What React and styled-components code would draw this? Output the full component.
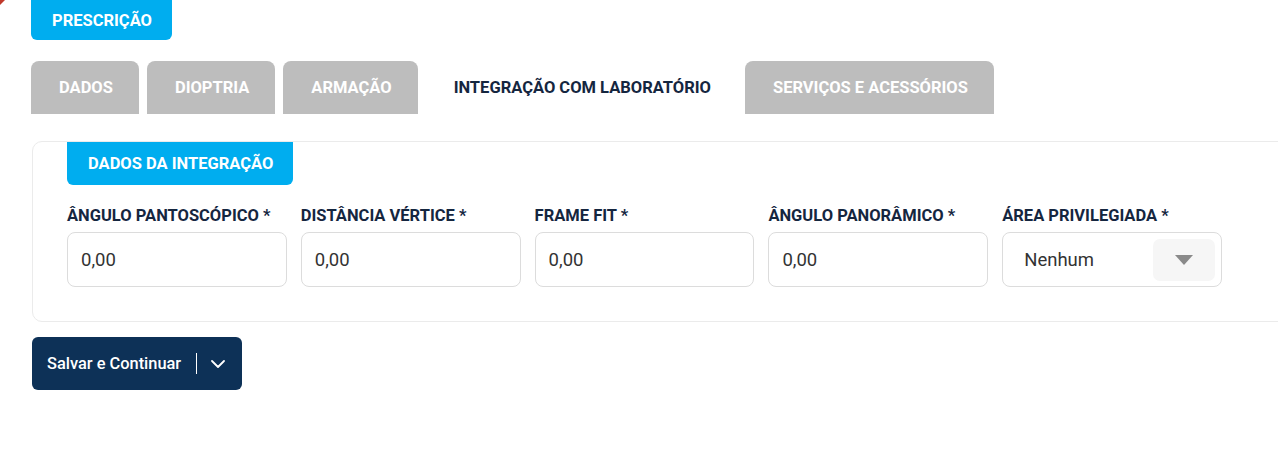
import React from "react";
import styled, { createGlobalStyle } from "styled-components";

const Global = createGlobalStyle`
  html, body { margin: 0; padding: 0; background: #fff; overflow: hidden; }
  body { font-family: Roboto, "Noto Sans", Arial, sans-serif; }
  * { box-sizing: border-box; }
`;

const Page = styled.div`
  position: relative;
  width: 1278px;
  height: 459px;
  padding-left: 31px;
  display: flex;
  flex-direction: column;
  align-items: flex-start;
`;

const Corner = styled.div`
  position: absolute;
  left: 0;
  top: 0;
  width: 0;
  height: 0;
  border-top: 5px solid #c0392b;
  border-right: 5px solid transparent;
`;

const SectionButton = styled.div`
  height: ${(p) => p.$h || 40}px;
  padding: 0 20px 0 21px;
  background: #00adef;
  color: #fff;
  font-weight: 700;
  font-size: 16.5px;
  display: flex;
  align-items: center;
  border-radius: 0 0 6px 6px;
  white-space: nowrap;
`;

const Tabs = styled.div`
  display: flex;
  gap: 8px;
  margin-top: 21px;
`;

const Tab = styled.div`
  height: 53px;
  padding: 0 26px 0 28px;
  display: flex;
  align-items: center;
  font-size: 16.5px;
  font-weight: 700;
  white-space: nowrap;
  border-radius: 8px 8px 0 0;
  background: ${(p) => (p.$active ? "transparent" : "#bdbdbd")};
  color: ${(p) => (p.$active ? "#15263f" : "#fff")};
`;

const Card = styled.div`
  margin-top: 27px;
  margin-left: 1px;
  width: 1300px;
  height: 181px;
  border: 1px solid #ebebeb;
  border-radius: 10px;
  padding: 0 34px;
  display: flex;
  flex-direction: column;
  align-items: flex-start;
`;

const Fields = styled.div`
  display: flex;
  gap: 14px;
  margin-top: 22px;
`;

const Field = styled.div`
  display: flex;
  flex-direction: column;
  gap: 8px;
  width: 219.8px;
`;

const Label = styled.div`
  font-size: 16.5px;
  line-height: 17px;
  font-weight: 700;
  color: #15263f;
  white-space: nowrap;
`;

const Input = styled.div`
  height: 55px;
  border: 1px solid #dcdcdc;
  border-radius: 8px;
  display: flex;
  align-items: center;
  justify-content: space-between;
  font-size: 18.5px;
  color: #333;
  padding-left: ${(p) => (p.$select ? 21 : 13)}px;
  padding-right: 6px;
`;

const ArrowBox = styled.div`
  width: 62px;
  height: 42px;
  border-radius: 7px;
  background: #f6f6f6;
  display: flex;
  align-items: center;
  justify-content: center;
`;

const SaveButton = styled.div`
  margin-top: 15px;
  margin-left: 1px;
  height: 53px;
  width: 210px;
  background: #0d3157;
  border-radius: 6px;
  color: #fff;
  display: flex;
  align-items: center;
  padding-left: 15px;
  font-size: 16.4px;
  font-weight: 500;
  white-space: nowrap;
`;

const Divider = styled.div`
  width: 1px;
  height: 21px;
  background: #fff;
  margin-left: 15px;
  margin-right: 14px;
`;

const fields = [
  { label: "ÂNGULO PANTOSCÓPICO *", value: "0,00" },
  { label: "DISTÂNCIA VÉRTICE *", value: "0,00" },
  { label: "FRAME FIT *", value: "0,00" },
  { label: "ÂNGULO PANORÂMICO *", value: "0,00" },
];

export default function App() {
  return (
    <>
      <Global />
      <Page>
        <Corner />
        <SectionButton>PRESCRIÇÃO</SectionButton>
        <Tabs>
          <Tab>DADOS</Tab>
          <Tab>DIOPTRIA</Tab>
          <Tab>ARMAÇÃO</Tab>
          <Tab $active>INTEGRAÇÃO COM LABORATÓRIO</Tab>
          <Tab>SERVIÇOS E ACESSÓRIOS</Tab>
        </Tabs>
        <Card>
          <SectionButton $h={43}>DADOS DA INTEGRAÇÃO</SectionButton>
          <Fields>
            {fields.map((f) => (
              <Field key={f.label}>
                <Label>{f.label}</Label>
                <Input>{f.value}</Input>
              </Field>
            ))}
            <Field>
              <Label>ÁREA PRIVILEGIADA *</Label>
              <Input $select>
                Nenhum
                <ArrowBox>
                  <svg width="18" height="10" viewBox="0 0 18 10">
                    <path d="M0 0 L18 0 L9 10 Z" fill="#8a8a8a" />
                  </svg>
                </ArrowBox>
              </Input>
            </Field>
          </Fields>
        </Card>
        <SaveButton>
          Salvar e Continuar
          <Divider />
          <svg width="14" height="8" viewBox="0 0 14 8" fill="none">
            <path d="M1 1 L7 7 L13 1" stroke="#fff" strokeWidth="1.8" strokeLinecap="round" strokeLinejoin="round" />
          </svg>
        </SaveButton>
      </Page>
    </>
  );
}
